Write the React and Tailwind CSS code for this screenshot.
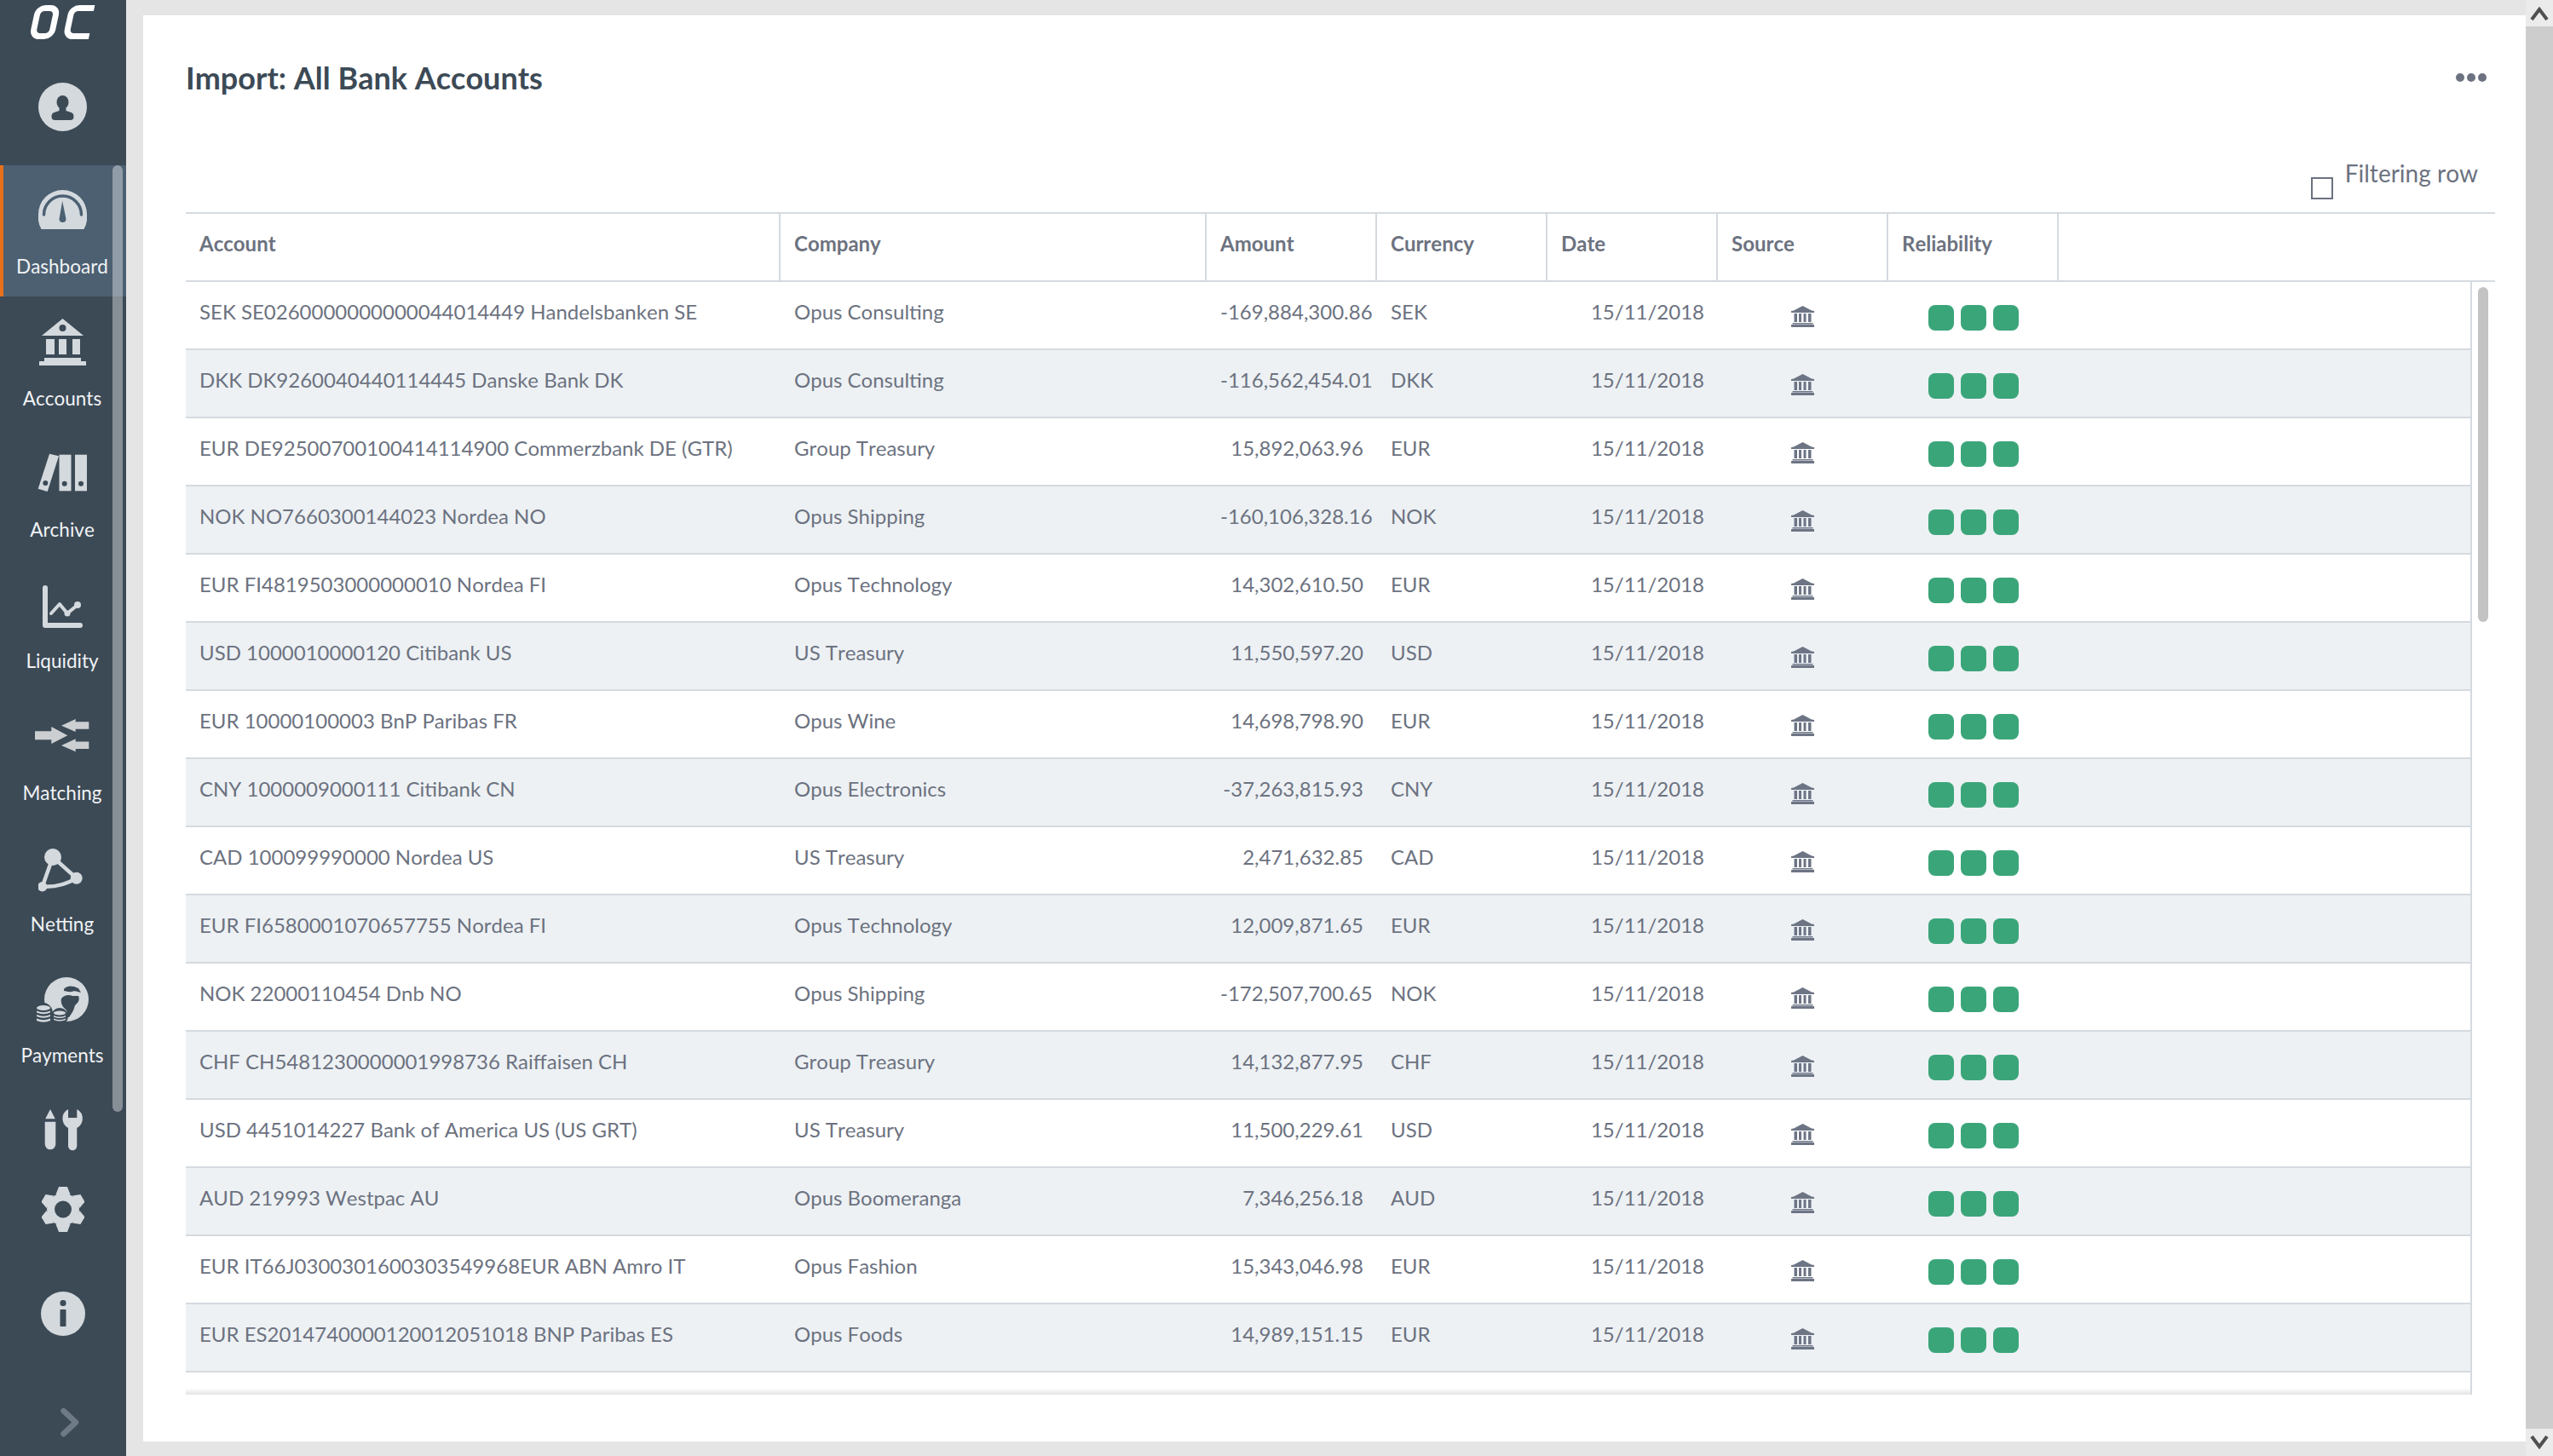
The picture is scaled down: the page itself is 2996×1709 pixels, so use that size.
import React from "react";

const ROWS = [
  ["SEK SE0260000000000044014449 Handelsbanken SE", "Opus Consulting", "-169,884,300.86", "SEK"],
  ["DKK DK9260040440114445 Danske Bank DK", "Opus Consulting", "-116,562,454.01", "DKK"],
  ["EUR DE92500700100414114900 Commerzbank DE (GTR)", "Group Treasury", "15,892,063.96", "EUR"],
  ["NOK NO7660300144023 Nordea NO", "Opus Shipping", "-160,106,328.16", "NOK"],
  ["EUR FI4819503000000010 Nordea FI", "Opus Technology", "14,302,610.50", "EUR"],
  ["USD 1000010000120 Citibank US", "US Treasury", "11,550,597.20", "USD"],
  ["EUR 10000100003 BnP Paribas FR", "Opus Wine", "14,698,798.90", "EUR"],
  ["CNY 1000009000111 Citibank CN", "Opus Electronics", "-37,263,815.93", "CNY"],
  ["CAD 100099990000 Nordea US", "US Treasury", "2,471,632.85", "CAD"],
  ["EUR FI6580001070657755 Nordea FI", "Opus Technology", "12,009,871.65", "EUR"],
  ["NOK 22000110454 Dnb NO", "Opus Shipping", "-172,507,700.65", "NOK"],
  ["CHF CH5481230000001998736 Raiffaisen CH", "Group Treasury", "14,132,877.95", "CHF"],
  ["USD 4451014227 Bank of America US (US GRT)", "US Treasury", "11,500,229.61", "USD"],
  ["AUD 219993 Westpac AU", "Opus Boomeranga", "7,346,256.18", "AUD"],
  ["EUR IT66J0300301600303549968EUR ABN Amro IT", "Opus Fashion", "15,343,046.98", "EUR"],
  ["EUR ES2014740000120012051018 BNP Paribas ES", "Opus Foods", "14,989,151.15", "EUR"],
];

const LIGHT = "#d3d9dd";
const DARK = "#3c4a56";

function Logo() {
  return (
    <svg width="78" height="44" viewBox="0 0 78 44" fill="none" stroke="#fff" strokeWidth="7">
      <g transform="skewX(-12)">
        <rect x="12.5" y="6.5" width="22" height="33" rx="8" />
        <path d="M78 6.5 H60 a8 8 0 0 0 -8 8 V31.5 a8 8 0 0 0 8 8 H79" />
      </g>
    </svg>
  );
}

function Avatar() {
  return (
    <svg width="57" height="57" viewBox="0 0 57 57">
      <circle cx="28.5" cy="28.5" r="28.5" fill={LIGHT} />
      <ellipse cx="28.5" cy="23" rx="7" ry="8" fill={DARK} />
      <path d="M24.5 30 h8 v3 l6 2 c3 1 3 4 3 5 c0 3 -2 4 -4 4 h-18 c-2 0 -4 -1 -4 -4 c0 -1 0 -4 3 -5 l6 -2 z" fill={DARK} />
    </svg>
  );
}

function Gauge() {
  return (
    <svg width="57" height="46" viewBox="0 0 57 46">
      <path d="M3.5 46 A28.5 28.5 0 0 1 0 28.5 A28.5 28.5 0 0 1 57 28.5 A28.5 28.5 0 0 1 53.5 46 Z" fill={LIGHT} />
      <path d="M6.5 29 A22 22 0 0 1 50.5 29" fill="none" stroke="#4c6072" strokeWidth="3.5" strokeLinecap="round" />
      <path d="M28.2 13 L24.5 34 A4 4 0 0 0 32.5 34 Z" fill="#4c6072" />
    </svg>
  );
}

function BankBig() {
  return (
    <svg width="55" height="55" viewBox="0 0 55 55" fill={LIGHT}>
      <path d="M3 20 L27.5 0 L52 20 Z" />
      <circle cx="27.5" cy="11" r="4" fill={DARK} />
      <rect x="8" y="24" width="10" height="18" />
      <rect x="23" y="24" width="9" height="18" />
      <rect x="39" y="24" width="9" height="18" />
      <rect x="6" y="46" width="43" height="4" />
      <rect x="0" y="50" width="55" height="5" />
    </svg>
  );
}

function BankSmall() {
  return (
    <svg width="27" height="25" viewBox="0 0 27 25" fill="#6d7585">
      <path d="M13.5 0 L24 5.5 L27 6 V8 H0 V6 L3 5.5 Z" />
      <rect x="3.5" y="9" width="3.5" height="10" />
      <rect x="9" y="9" width="3" height="10" />
      <rect x="14.5" y="9" width="3" height="10" />
      <rect x="20" y="9" width="3.5" height="10" />
      <rect x="1.5" y="20" width="24" height="1.5" />
      <rect x="0" y="22" width="27" height="3" />
    </svg>
  );
}

function Archive() {
  return (
    <svg width="58" height="45" viewBox="0 0 58 45" fill={LIGHT}>
      <path d="M14 .7 L25 3.3 L11.7 45 L.7 41.7 Z" />
      <rect x="25.5" y="1.7" width="14" height="42.6" />
      <rect x="44" y="1.7" width="14" height="42.6" />
      <circle cx="9.3" cy="35" r="3" fill={DARK} />
      <circle cx="31.7" cy="35.7" r="3" fill={DARK} />
      <circle cx="51" cy="35.7" r="3" fill={DARK} />
    </svg>
  );
}

function Liquidity() {
  return (
    <svg width="47" height="50" viewBox="0 0 47 50" fill="none" stroke={LIGHT}>
      <path d="M3 3 V47 H44" strokeWidth="6" strokeLinecap="round" strokeLinejoin="round" />
      <path d="M10 33 L20 22 L29 33 L41 23" strokeWidth="4" strokeLinecap="round" strokeLinejoin="round" />
      <circle cx="29" cy="33" r="3.5" fill={LIGHT} stroke="none" />
      <circle cx="41" cy="23" r="4" fill={LIGHT} stroke="none" />
    </svg>
  );
}

function Matching() {
  return (
    <svg width="64" height="39" viewBox="0 0 64 39" fill="#cccfd1">
      <path d="M0 14.3 H19.3 V9 L38.3 19.3 L19.3 29 V24.3 H0 Z" />
      <path d="M31 7.7 L47.7 0 V3.3 H63.3 V11.7 H47.7 V15 Z" />
      <path d="M31 31 L47.7 23.3 V26.6 H63.3 V35 H47.7 V38.3 Z" />
    </svg>
  );
}

function Netting() {
  return (
    <svg width="56" height="57" viewBox="18 16 56 57" fill={LIGHT} stroke={LIGHT}>
      <path d="M35 26 L62.7 50.7 Q45 62 22.7 60.7 Z" fill="none" strokeWidth="4.5" />
      <circle cx="35" cy="26" r="10" stroke="none" />
      <circle cx="62.7" cy="50.7" r="7" stroke="none" />
      <circle cx="22.7" cy="60.7" r="5.7" stroke="none" />
    </svg>
  );
}

function Payments() {
  return (
    <svg width="62" height="54" viewBox="8 17 62 54" fill={LIGHT}>
      <circle cx="44" cy="43" r="26" />
      <path d="M38 42 C41 38 47 37 51 39 L58 39 C60 43 58 47 54 50 C53 55 50 60 47 64 L45 64 C45 59 45 56 42 54 C39 51 37 47 38 42 Z" fill={DARK} />
      <path d="M41 31 C44 27 50 26 58 30 L61 35 C57 34 54 32 50 34 C46 35 44 33 41 33 Z" fill={DARK} />
      <ellipse cx="17" cy="60" rx="11" ry="13" fill={DARK} />
      <ellipse cx="36" cy="63" rx="10" ry="10" fill={DARK} />
      <g>
        <ellipse cx="17" cy="53" rx="8" ry="3" />
        <path d="M9 56.5 Q17 60 25 56.5 V58.5 Q17 62 9 58.5 Z" />
        <path d="M9 61 Q17 64.5 25 61 V63 Q17 66.5 9 63 Z" />
        <path d="M9 65.5 Q17 69 25 65.5 V68 Q17 71.5 9 68 Z" />
        <ellipse cx="36" cy="59" rx="7" ry="2.5" />
        <path d="M29 62 Q36 65 43 62 V63.5 Q36 66.5 29 63.5 Z" />
        <path d="M29 65.5 Q36 68.5 43 65.5 V67 Q36 70 29 67 Z" />
      </g>
    </svg>
  );
}

function Tools() {
  return (
    <svg width="46" height="49" viewBox="0 0 46 49" fill={LIGHT}>
      <path d="M7 0 L1.2 11.3 H12.8 Z" />
      <path d="M.7 14.7 H13.3 V41 A6.3 6.3 0 0 1 .7 41 Z" />
      <path d="M28 0 V10 H38.3 V0 A12.5 12.5 0 0 1 38.3 22 V43 A5.1 5.1 0 0 1 28 43 V22 A12.5 12.5 0 0 1 28 0 Z" />
    </svg>
  );
}

function Gear() {
  const teeth = [0, 60, 120, 180, 240, 300];
  return (
    <svg width="50" height="53" viewBox="0 0 50 53" fill={LIGHT}>
      <circle cx="25" cy="26.5" r="19" />
      {teeth.map((a) => (
        <path key={a} d="M16.5 9 L20 0 H30 L33.5 9 Z" transform={`rotate(${a} 25 26.5)`} />
      ))}
      <circle cx="25" cy="26.5" r="10" fill={DARK} />
    </svg>
  );
}

function Info() {
  return (
    <svg width="52" height="52" viewBox="0 0 52 52">
      <circle cx="26" cy="26" r="26" fill={LIGHT} />
      <rect x="22.5" y="10" width="7" height="7" rx="3" fill={DARK} />
      <rect x="22.5" y="21" width="7" height="20" rx="1" fill={DARK} />
    </svg>
  );
}

function NavItem({ label, active, children, shift = "" }) {
  return (
    <div className={`relative flex h-[154.4px] flex-col items-center pr-[2px] ${active ? "bg-[#4c6072]" : ""}`}>
      {active && <div className="absolute left-0 top-0 h-full w-1 bg-[#e8701a]" />}
      <div className={`flex h-[104px] items-center justify-center ${shift}`}>{children}</div>
      <div className="text-[22.5px] leading-[30px] text-[#f1f3f5]">{label}</div>
    </div>
  );
}

function Sidebar() {
  return (
    <aside className="relative flex h-full w-[148px] shrink-0 flex-col overflow-hidden bg-[#3c4a56]">
      <div className="flex h-[97px] items-start justify-center pr-[2px] pt-[3px]"><Logo /></div>
      <div className="flex h-[97px] items-start justify-center pr-[2px]"><Avatar /></div>
      <NavItem label="Dashboard" active><Gauge /></NavItem>
      <NavItem label="Accounts" shift="mt-[1px]"><BankBig /></NavItem>
      <NavItem label="Archive"><Archive /></NavItem>
      <NavItem label="Liquidity" shift="pt-[6px]"><Liquidity /></NavItem>
      <NavItem label="Matching"><Matching /></NavItem>
      <NavItem label="Netting" shift="pt-[14px]"><Netting /></NavItem>
      <NavItem label="Payments" shift="pt-[4px]"><Payments /></NavItem>
      <div className="flex flex-col items-center pr-[2px]">
        <div className="mt-[27px] h-[49px] pl-[4px]"><Tools /></div>
        <div className="mt-[42px] h-[53px] pl-[1px]"><Gear /></div>
        <div className="mt-[70px] h-[52px] pl-[1px]"><Info /></div>
        <div className="mt-[84px] h-[35px] pl-[18px]">
          <svg width="22" height="35" viewBox="0 0 22 35" fill="none" stroke="#6e7a86" strokeWidth="6.5" strokeLinecap="round" strokeLinejoin="round">
            <path d="M3.5 4 L18 17.5 L3.5 31" />
          </svg>
        </div>
      </div>
      <div className="absolute left-[132px] top-[194px] h-[1111px] w-3 rounded-md bg-white/38" />
    </aside>
  );
}

const HEAD_COLS = ["w-[698px]", "w-[500px]", "w-[200px]", "w-[200px]", "w-[200px]", "w-[200px]", "w-[200px]"];
const COLS = ["w-[697px]", "w-[500px]", "w-[200px]", "w-[200px]", "w-[200px]", "w-[200px]", "w-[200px]"];
const HEAD = ["Account", "Company", "Amount", "Currency", "Date", "Source", "Reliability"];

function Header() {
  return (
    <div className="flex h-[82px] border-y-2 border-[#d5dadf] text-[24px] font-bold text-[#6c7280]">
      {HEAD.map((h, i) => (
        <div key={h} className={`${HEAD_COLS[i]} flex items-center border-r-2 border-[#d5dadf] pb-[8px] pl-4`}>{h}</div>
      ))}
    </div>
  );
}

function Row({ row, zebra }) {
  return (
    <div className={`flex h-20 border-b-2 border-[#d5dadf] text-[24px] text-[#6c7280] ${zebra ? "bg-[#edf1f4]" : "bg-white"}`}>
      <div className={`${COLS[0]} flex items-center pb-[9px] pl-4`}>{row[0]}</div>
      <div className={`${COLS[1]} flex items-center pb-[9px] pl-[17px]`}>{row[1]}</div>
      <div className={`${COLS[2]} flex items-center pb-[9px] pl-[17px] pr-[15px]`}>
        <div className="w-full whitespace-nowrap text-right">{row[2]}</div>
      </div>
      <div className={`${COLS[3]} flex items-center pb-[9px] pl-[17px]`}>{row[3]}</div>
      <div className={`${COLS[4]} flex items-center justify-end pb-[9px] pr-[15px]`}>15/11/2018</div>
      <div className={`${COLS[5]} flex items-center justify-center pt-[3px]`}><BankSmall /></div>
      <div className={`${COLS[6]} flex items-center justify-center gap-2 pl-[2px] pt-[5px]`}>
        <div className="size-[30px] rounded-lg bg-[#3ba57a]" />
        <div className="size-[30px] rounded-lg bg-[#3ba57a]" />
        <div className="size-[30px] rounded-lg bg-[#3ba57a]" />
      </div>
    </div>
  );
}

function PageScrollbar() {
  return (
    <div className="flex h-full w-8 shrink-0 flex-col bg-[#cdcdcd]">
      <div className="flex h-[31px] items-center justify-center bg-[#ebebeb]">
        <svg width="22" height="16" viewBox="0 0 22 16" fill="none" stroke="#505050" strokeWidth="4"><path d="M2 15 L11 3 L20 15" /></svg>
      </div>
      <div className="flex-1" />
      <div className="flex h-8 items-center justify-center bg-[#ebebeb]">
        <svg width="22" height="16" viewBox="0 0 22 16" fill="none" stroke="#505050" strokeWidth="4"><path d="M2 1 L11 13 L20 1" /></svg>
      </div>
    </div>
  );
}

export default function App() {
  return (
    <div className="flex h-[1709px] w-[2996px] overflow-hidden bg-[#e5e5e5] font-[family-name:Lato,sans-serif] [font-kerning:none]">
      <Sidebar />
      <main className="min-w-0 flex-1 pb-[17px] pl-5 pt-[18px]">
        <div className="flex h-full flex-col bg-white">
          <div className="flex items-center justify-between pl-[50px] pr-[46px] pt-[48px]">
            <h1 className="text-[36px] font-bold leading-[50px] text-[#3c4a56]">Import: All Bank Accounts</h1>
            <div className="flex gap-[3px]">
              <span className="size-[10px] rounded-full bg-[#6c7280]" />
              <span className="size-[10px] rounded-full bg-[#6c7280]" />
              <span className="size-[10px] rounded-full bg-[#6c7280]" />
            </div>
          </div>
          <div className="flex h-[133px] items-start justify-end gap-[14px] pr-[56px] pt-[69px]">
            <span className="mt-[23px] size-[26px] border-2 border-[#6c7280]" />
            <span className="text-[28px] leading-[36px] text-[#6c7280]">Filtering row</span>
          </div>
          <div className="ml-[50px] mr-9 flex flex-1 flex-col">
            <Header />
            <div className="flex">
              <div className="h-[1306px] w-[2683px] overflow-hidden border-r-2 border-[#d5dadf]">
                {ROWS.map((r, i) => <Row key={r[0]} row={r} zebra={i % 2 === 1} />)}
                <div className="h-[26px] bg-gradient-to-b from-white from-70% to-[#e4e4e4]" />
              </div>
              <div className="pl-[7px] pt-[6px]">
                <div className="h-[393px] w-3 rounded-md bg-[#c3c3c3]" />
              </div>
            </div>
          </div>
        </div>
      </main>
      <PageScrollbar />
    </div>
  );
}
